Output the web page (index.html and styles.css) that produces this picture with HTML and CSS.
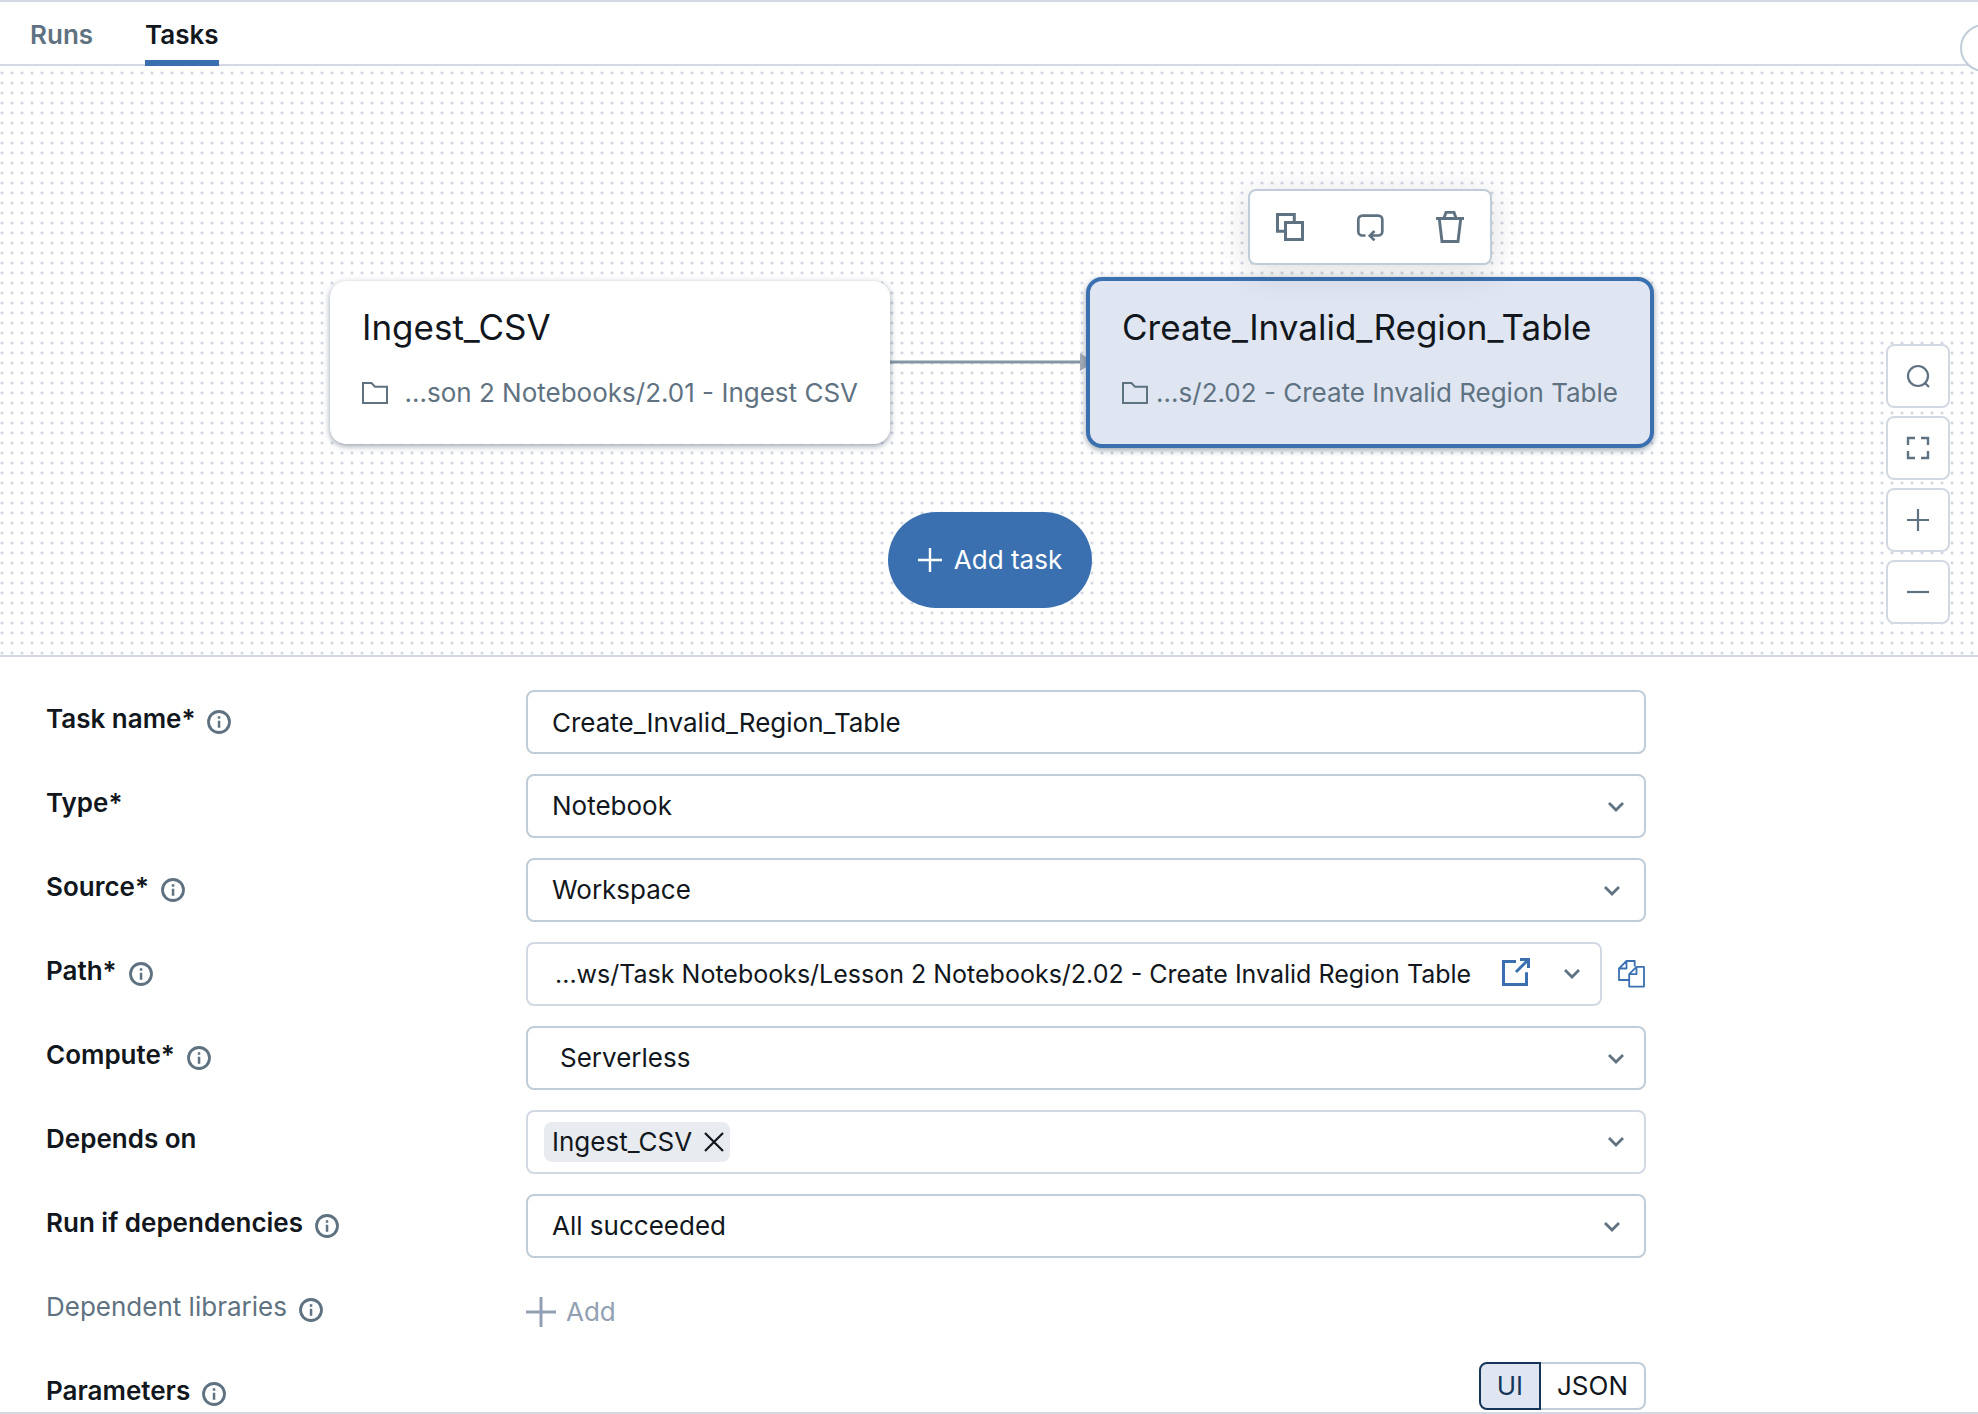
FILE: index.html
```html
<!DOCTYPE html>
<html lang="en">
<head>
<meta charset="utf-8">
<meta name="viewport" content="width=device-width, initial-scale=1">
<title>Job tasks</title>
<link rel="stylesheet" href="styles.css">
</head>
<body>
<svg class="sprite" aria-hidden="true">
  <symbol id="info" viewBox="0 0 24 24"><circle cx="12" cy="12" r="10.5" fill="none" stroke="currentColor" stroke-width="2.8"/><path d="M10.8 10.7h2.5v7h-2.5zM10.8 6.3h2.5v2.5h-2.5z" fill="currentColor"/></symbol>
  <symbol id="chevron" viewBox="0 0 16 10"><path d="M1 1l7 7 7-7" fill="none" stroke="currentColor" stroke-width="2.8"/></symbol>
  <symbol id="folder" viewBox="0 0 26 22"><path d="M1 1h8.500l3.500 3.800H25V21H1z" fill="none" stroke="currentColor" stroke-width="2"/></symbol>
  <symbol id="plus" viewBox="0 0 24 24"><path d="M12 0v24M0 12h24" fill="none" stroke="currentColor" stroke-width="2.4"/></symbol>
</svg>

<header class="topbar">
  <nav class="tabs">
    <a class="tab" href="#runs">Runs</a>
    <a class="tab tab-active" href="#tasks" aria-current="page">Tasks</a>
  </nav>
  <button class="round" type="button" aria-label="Collapse panel"></button>
</header>

<main>
  <section class="canvas" aria-label="Task graph">
    <svg class="edge" viewBox="0 0 196 18" aria-hidden="true"><path d="M0 9h192" stroke="#8595a6" stroke-width="3"/><path d="M190 0l14 9-14 9z" fill="#a5abb7"/></svg>
    <article class="node node-ingest">
      <h2 class="node-title">Ingest_CSV</h2>
      <p class="node-path"><svg class="folder"><use href="#folder"/></svg><span>...son 2 Notebooks/2.01 - Ingest CSV</span></p>
    </article>
    <article class="node node-create">
      <h2 class="node-title">Create_Invalid_Region_Table</h2>
      <p class="node-path"><svg class="folder"><use href="#folder"/></svg><span>...s/2.02 - Create Invalid Region Table</span></p>
    </article>
    <div class="node-tools">
      <button type="button" aria-label="Clone task"><svg viewBox="0 0 32 32"><path d="M10 20.300H3.500V3.500h16.800V10M11.500 11.500h17v17h-17z" fill="none" stroke="currentColor" stroke-width="3"/></svg></button>
      <button type="button" aria-label="Loop task"><svg viewBox="0 0 32 32"><path d="M11.500 24.500H8.300a4 4 0 0 1-4-4V8.600a4 4 0 0 1 4-4h16a4 4 0 0 1 4 4v11.900a4 4 0 0 1-4 4H16M20.500 20l-4.700 4.700 4.700 4.700" fill="none" stroke="currentColor" stroke-width="2.700"/></svg></button>
      <button type="button" aria-label="Delete task"><svg viewBox="0 0 32 32"><path d="M2 7.500h28M9.800 7.500L12 1.400h8l2.200 6.100M5.300 8L8 30.500h16L26.700 8" fill="none" stroke="currentColor" stroke-width="2.900"/></svg></button>
    </div>
    <button class="add-task" type="button"><svg><use href="#plus"/></svg>Add task</button>
    <div class="zoom-tools">
      <button type="button" aria-label="Search"><svg viewBox="0 0 24 24"><circle cx="12" cy="12" r="10" fill="none" stroke="currentColor" stroke-width="2.200"/><path d="M18.500 18.500l4.500 4.500" stroke="currentColor" stroke-width="2.200"/></svg></button>
      <button type="button" aria-label="Fit to view"><svg viewBox="0 0 24 24"><path d="M2 9V2h7M15 2h7v7M22 15v7h-7M9 22H2v-7" fill="none" stroke="currentColor" stroke-width="2.400"/></svg></button>
      <button type="button" aria-label="Zoom in"><svg viewBox="0 0 24 24"><path d="M12 1v22M1 12h22" stroke="currentColor" stroke-width="2.200"/></svg></button>
      <button type="button" aria-label="Zoom out"><svg viewBox="0 0 24 24"><path d="M1 12h22" stroke="currentColor" stroke-width="2.200"/></svg></button>
    </div>
  </section>

  <form class="form">
    <div class="row">
      <div class="label"><label for="name">Task name*</label><svg class="info"><use href="#info"/></svg></div>
      <input class="field" id="name" type="text" value="Create_Invalid_Region_Table">
    </div>
    <div class="row">
      <div class="label"><label for="type">Type*</label></div>
      <div class="select"><select class="field" id="type"><option>Notebook</option></select><svg class="chevron"><use href="#chevron"/></svg></div>
    </div>
    <div class="row">
      <div class="label"><label for="source">Source*</label><svg class="info"><use href="#info"/></svg></div>
      <div class="select select-inset"><select class="field" id="source"><option>Workspace</option></select><svg class="chevron"><use href="#chevron"/></svg></div>
    </div>
    <div class="row">
      <div class="label"><label for="path">Path*</label><svg class="info"><use href="#info"/></svg></div>
      <div class="path-group">
        <div class="field combo path-box">
          <button class="path-text" id="path" type="button">...ws/Task Notebooks/Lesson 2 Notebooks/2.02 - Create Invalid Region Table</button>
          <a class="icon-link" href="#notebook" aria-label="Open notebook"><svg viewBox="0 0 28 28"><path d="M14 3.500H1.500v23h23V14.300M14 14L26 2M18 1.500h8.500V10" fill="none" stroke="currentColor" stroke-width="3"/></svg></a>
          <svg class="chevron"><use href="#chevron"/></svg>
        </div>
        <button class="copy" type="button" aria-label="Copy path"><svg viewBox="0 0 28 28"><path d="M10.500 20H1V8.500L8.500 1h8.200v5.500M8.500 1v7.500H1M11.200 26.600V14.200L18.500 6.800h7.500v19.800zM18.500 6.800v7.400h-7.300" fill="none" stroke="currentColor" stroke-width="1.800" stroke-linejoin="round"/></svg></button>
      </div>
    </div>
    <div class="row">
      <div class="label"><label for="compute">Compute*</label><svg class="info"><use href="#info"/></svg></div>
      <div class="select"><select class="field field-indent" id="compute"><option>Serverless</option></select><svg class="chevron"><use href="#chevron"/></svg></div>
    </div>
    <div class="row">
      <div class="label"><label for="depends">Depends on</label></div>
      <div class="field combo depends-box">
        <span class="chip">Ingest_CSV<button id="depends" type="button" aria-label="Remove Ingest_CSV"><svg viewBox="0 0 20 20"><path d="M1 1l18 18M19 1L1 19" stroke="currentColor" stroke-width="2.200"/></svg></button></span>
        <svg class="chevron"><use href="#chevron"/></svg>
      </div>
    </div>
    <div class="row">
      <div class="label"><label for="runif">Run if dependencies</label><svg class="info"><use href="#info"/></svg></div>
      <div class="select select-inset"><select class="field" id="runif"><option>All succeeded</option></select><svg class="chevron"><use href="#chevron"/></svg></div>
    </div>
    <div class="row">
      <div class="label label-muted"><label for="libraries">Dependent libraries</label><svg class="info"><use href="#info"/></svg></div>
      <button class="add" id="libraries" type="button"><svg><use href="#plus"/></svg>Add</button>
    </div>
    <div class="row row-last">
      <div class="label"><span>Parameters</span><svg class="info"><use href="#info"/></svg></div>
      <div class="toggle" role="group" aria-label="Parameters view">
        <button class="toggle-on" type="button" aria-pressed="true">UI</button>
        <button type="button" aria-pressed="false">JSON</button>
      </div>
    </div>
  </form>
</main>
</body>
</html>
```

FILE: styles.css
```css
* {
  box-sizing: border-box;
}

body {
  margin: 0;
  overflow-x: hidden;
  background: #fff;
  color: #11171c;
  font: 400 26px/32px Inter, "Liberation Sans", sans-serif;
}

button,
input,
select {
  font: inherit;
  color: inherit;
}

button {
  padding: 0;
  border: 0;
  background: none;
}

svg {
  display: block;
  flex: none;
}

.sprite {
  position: absolute;
  width: 0;
  height: 0;
}

/* Tabs */
.topbar {
  position: relative;
  z-index: 1;
  border-top: 2px solid #d3d8e3;
  border-bottom: 2px solid #d3d8e3;
}

.tabs {
  display: flex;
  gap: 52px;
  height: 62px;
  padding-left: 30px;
}

.tab {
  height: 64px;
  padding-top: 17px;
  border-bottom: 6px solid transparent;
  color: #5f7281;
  font-weight: 600;
  text-decoration: none;
}

.tab-active {
  border-color: #3b70b0;
  color: #11171c;
}

.round {
  position: absolute;
  top: 22px;
  right: -30px;
  width: 48px;
  height: 48px;
  border: 2px solid #c0cdd8;
  border-radius: 50%;
  background: #fff;
}

/* Task graph */
.canvas {
  position: relative;
  height: 591px;
  border-bottom: 2px solid #d3d8e3;
  background: radial-gradient(circle at 2px 7px, #d3d8e3 1px, transparent 2px) 0 0 / 10px 10px;
}

.edge {
  position: absolute;
  top: 287px;
  left: 890px;
  width: 196px;
  height: 18px;
}

.node {
  position: absolute;
  width: 560px;
  height: 163px;
  padding: 24px 32px;
  border-radius: 16px;
  background: #fff;
  box-shadow: 0 2px 6px rgba(60, 80, 100, 0.55);
}

.node-ingest {
  top: 215px;
  left: 330px;
}

.node-create {
  top: 211px;
  left: 1086px;
  width: 568px;
  height: 171px;
  border: 4px solid #3b70b0;
  background: #dfe6f2;
}

.node-title {
  margin: 0;
  font-size: 35px;
  font-weight: 400;
  line-height: 44px;
}

.node-path {
  display: flex;
  align-items: center;
  justify-content: space-between;
  margin: 28px 0 0;
  color: #5f7281;
  line-height: 32px;
  white-space: nowrap;
}

.folder {
  width: 26px;
  height: 22px;
}

.node-tools {
  position: absolute;
  top: 123px;
  left: 1248px;
  display: flex;
  align-items: center;
  justify-content: space-between;
  width: 244px;
  height: 76px;
  padding: 0 24px;
  border: 2px solid #c0cdd8;
  border-radius: 8px;
  background: #fff;
  box-shadow: 0 6px 32px rgba(0, 0, 0, 0.14);
  color: #5f7281;
}

.node-tools svg {
  width: 32px;
  height: 32px;
}

.add-task {
  position: absolute;
  top: 446px;
  left: 888px;
  display: flex;
  align-items: center;
  justify-content: center;
  gap: 12px;
  width: 204px;
  height: 96px;
  border-radius: 48px;
  background: #3b70b0;
  color: #fff;
}

.add-task svg {
  width: 24px;
  height: 24px;
}

.zoom-tools {
  position: absolute;
  top: 278px;
  right: 28px;
  display: grid;
  gap: 8px;
  color: #5f7281;
}

.zoom-tools button {
  display: grid;
  place-items: center;
  width: 64px;
  height: 64px;
  border: 2px solid #d3d9e3;
  border-radius: 8px;
  background: #fff;
}

.zoom-tools svg {
  width: 24px;
  height: 24px;
}

/* Task settings */
.form {
  display: grid;
  gap: 20px;
  padding: 33px 332px 0 46px;
  border-bottom: 2px solid #d3d8e3;
}

.row {
  display: grid;
  grid-template-columns: 480px 1fr;
  height: 64px;
}

.row-last {
  height: 50px;
}

.label {
  display: flex;
  gap: 12px;
  padding-top: 13px;
  font-weight: 600;
}

.label-muted {
  color: #5f7281;
  font-weight: 400;
}

.info {
  width: 24px;
  height: 24px;
  margin-top: 7px;
  color: #5f7281;
}

.field {
  width: 100%;
  height: 64px;
  padding: 0 24px;
  border: 2px solid #c0cdd8;
  border-radius: 8px;
  background: #fff;
}

.field-indent {
  padding-left: 32px;
}

.select {
  position: relative;
}

.select select {
  appearance: none;
}

.chevron {
  width: 16px;
  height: 10px;
  color: #5f7281;
}

.select .chevron {
  position: absolute;
  top: 28px;
  right: 22px;
  pointer-events: none;
}

.select-inset .chevron {
  right: 26px;
}

.combo {
  display: flex;
  align-items: center;
  border-color: #d3d9e3;
}

.path-group {
  display: flex;
  gap: 16px;
}

.path-box {
  flex: 1;
  gap: 16px;
  padding: 0 20px 0 27px;
}

.path-text {
  flex: 1;
  font-size: 25px;
  text-align: left;
  white-space: nowrap;
}

.icon-link {
  padding-bottom: 4px;
  color: #3b70b0;
}

.icon-link svg {
  width: 28px;
  height: 28px;
}

.path-box .chevron {
  margin-left: 18px;
}

.copy {
  color: #3b70b0;
}

.copy svg {
  width: 28px;
  height: 28px;
}

.depends-box {
  justify-content: space-between;
  padding: 0 20px 0 16px;
}

.chip {
  display: flex;
  align-items: center;
  gap: 12px;
  height: 40px;
  padding: 0 6px 0 8px;
  border-radius: 8px;
  background: #e8ebf0;
}

.chip svg {
  width: 20px;
  height: 20px;
}

.add {
  display: flex;
  align-items: center;
  justify-self: start;
  gap: 10px;
  padding-top: 4px;
  color: #92a0b3;
}

.add svg {
  width: 30px;
  height: 30px;
}

.toggle {
  display: flex;
  justify-self: end;
  height: 48px;
}

.toggle button {
  padding: 0 16px;
  border: 2px solid #c0cdd8;
  border-left: 0;
  border-radius: 0 8px 8px 0;
}

.toggle .toggle-on {
  border: 2px solid #16355a;
  border-radius: 8px 0 0 8px;
  background: #dfe6f2;
  color: #16355a;
}
```
